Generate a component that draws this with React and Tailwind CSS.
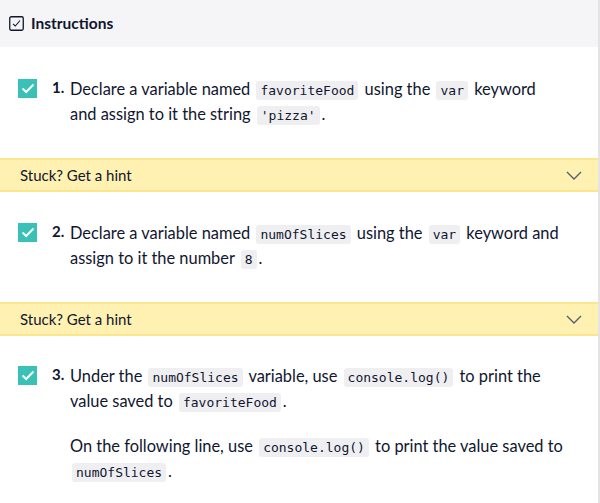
import React from 'react'

const font = { fontFamily: 'Lato, "Liberation Sans", sans-serif' }

function Code({ children }) {
  return (
    <code className="mx-[2px] rounded-[3px] bg-[#efeff2] px-[4px] py-[2px] text-[13px] leading-none text-[#10162f] [font-family:'DejaVu_Sans_Mono',monospace]">
      {children}
    </code>
  )
}

function Check() {
  return (
    <div className="mt-[3px] flex h-[19px] w-[19px] shrink-0 items-center justify-center bg-[#3ac1b7]">
      <svg width="14" height="11" viewBox="0 0 14 11" fill="none">
        <path d="M1.5 5.5 L5.2 9 L12.5 1.5" stroke="white" strokeWidth="2" />
      </svg>
    </div>
  )
}

function Hint() {
  return (
    <div className="flex h-[34px] items-center justify-between border-y-2 border-[#fbe68b] bg-[#fff1b2] pl-[20px] pr-[16px] text-[15px] text-[#10162f]">
      <span>Stuck? Get a hint</span>
      <svg width="16" height="9" viewBox="0 0 16 9" fill="none">
        <path d="M1 1 L8 8 L15 1" stroke="#555a6b" strokeWidth="1.3" />
      </svg>
    </div>
  )
}

function Step({ n, children, className }) {
  return (
    <div className={'flex pl-[18px] pr-[16px] ' + className}>
      <Check />
      <span className="ml-[15px] w-[18px] shrink-0 text-[15px] font-bold leading-[22px]">{n}.</span>
      <div className="text-[16.4px] leading-[25px]">{children}</div>
    </div>
  )
}

export default function App() {
  return (
    <div className="h-[503px] w-[600px] overflow-hidden border-r-2 border-[#e4e4e7] bg-white text-[#10162f]" style={font}>
      <div className="flex h-[47px] items-center gap-[7px] bg-[#f5f5f7] pl-[9px]">
        <svg width="15" height="15" viewBox="0 0 15 15" fill="none">
          <rect x="0.75" y="0.75" width="13.5" height="13.5" rx="1.5" stroke="#10162f" strokeWidth="1.3" />
          <path d="M4 7.8 L6.3 10 L11 4.5" stroke="#10162f" strokeWidth="1.1" />
        </svg>
        <span className="text-[15.5px] font-bold">Instructions</span>
      </div>

      <Step n={1} className="pt-[29px] pb-[32px]">
        Declare a variable named <Code>favoriteFood</Code> using the <Code>var</Code> keyword
        <br />
        and assign to it the string <Code>'pizza'</Code>.
      </Step>
      <Hint />

      <Step n={2} className="pt-[28px] pb-[32px]">
        Declare a variable named <Code>numOfSlices</Code> using the <Code>var</Code> keyword and
        <br />
        assign to it the number <Code>8</Code>.
      </Step>
      <Hint />

      <Step n={3} className="pt-[27px]">
        <p>
          Under the <Code>numOfSlices</Code> variable, use <Code>console.log()</Code> to print the
          <br />
          value saved to <Code>favoriteFood</Code>.
        </p>
        <p className="mt-[20px]">
          On the following line, use <Code>console.log()</Code> to print the value saved to
          <br />
          <Code>numOfSlices</Code>.
        </p>
      </Step>
    </div>
  )
}
